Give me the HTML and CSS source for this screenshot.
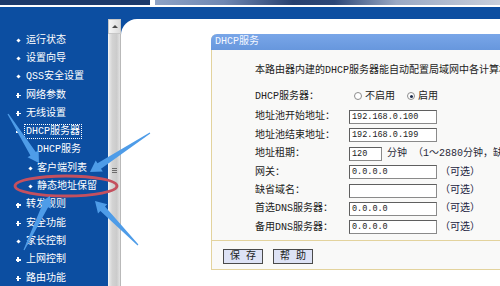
FILE: index.html
```html
<!DOCTYPE html>
<html lang="zh-CN">
<head>
<meta charset="utf-8">
<title>DHCP服务</title>
<link rel="stylesheet" href="styles.css">
</head>
<body>
<div class="page">
  <div class="topstrip"><div class="ts-left"></div><div class="ts-banner"></div></div>
  <div class="main">
    <nav class="sidebar">
      <ul class="menu">
        <li class="item"><span class="b b-dot"></span><span class="t">运行状态</span></li>
        <li class="item"><span class="b b-dot"></span><span class="t">设置向导</span></li>
        <li class="item"><span class="b b-dot"></span><span class="t">QSS安全设置</span></li>
        <li class="item"><span class="b b-plus"></span><span class="t">网络参数</span></li>
        <li class="item"><span class="b b-plus"></span><span class="t">无线设置</span></li>
        <li class="item"><span class="b b-minus"></span><span class="t focus">DHCP服务器</span></li>
        <li class="item sub"><span class="b b-dot"></span><span class="t">DHCP服务</span></li>
        <li class="item sub"><span class="b b-dot"></span><span class="t">客户端列表</span></li>
        <li class="item sub"><span class="b b-dot"></span><span class="t">静态地址保留</span></li>
        <li class="item"><span class="b b-plus"></span><span class="t">转发规则</span></li>
        <li class="item"><span class="b b-plus"></span><span class="t">安全功能</span></li>
        <li class="item"><span class="b b-dot"></span><span class="t">家长控制</span></li>
        <li class="item"><span class="b b-plus"></span><span class="t">上网控制</span></li>
        <li class="item"><span class="b b-plus"></span><span class="t">路由功能</span></li>
      </ul>
    </nav>
    <div class="scrollbar">
      <div class="sb-up"><span class="chev"></span></div>
      <div class="sb-thumb"><span class="grip"></span></div>
    </div>
    <div class="content">
      <div class="panel">
        <div class="panel-head">DHCP服务</div>
        <div class="panel-body">
          <p class="desc">本路由器内建的DHCP服务器能自动配置局域网中各计算机的TCP/IP协议。</p>
          <div class="radio-row">
            <span class="label">DHCP服务器：</span>
            <span class="radio"></span><span class="rtext">不启用</span>
            <span class="radio checked"></span><span class="rtext">启用</span>
          </div>
          <div class="row"><span class="label">地址池开始地址：</span><span class="input">192.168.0.100</span></div>
          <div class="row"><span class="label">地址池结束地址：</span><span class="input">192.168.0.199</span></div>
          <div class="row"><span class="label">地址租期：</span><span class="input short">120</span><span class="note">分钟 （1～2880分钟，缺省为120分钟）</span></div>
          <div class="row"><span class="label">网关：</span><span class="input">0.0.0.0</span><span class="opt">（可选）</span></div>
          <div class="row"><span class="label">缺省域名：</span><span class="input"></span><span class="opt">（可选）</span></div>
          <div class="row"><span class="label">首选DNS服务器：</span><span class="input">0.0.0.0</span><span class="opt">（可选）</span></div>
          <div class="row"><span class="label">备用DNS服务器：</span><span class="input">0.0.0.0</span><span class="opt">（可选）</span></div>
        </div>
        <div class="btnbar"><span class="btn">保 存</span><span class="btn">帮 助</span></div>
      </div>
    </div>
  </div>
  <svg class="annot" width="500" height="286" viewBox="0 0 500 286">
    <ellipse cx="66" cy="186" rx="51" ry="10" fill="none" stroke="#c4505f" stroke-width="2.8"/>
    <g fill="#4e9ce8">
      <polygon points="7.5,114.3 30.4,155.4 27.6,157.2 39,163 38.6,150.2 35.8,152 8.5,113.7"/>
      <polygon points="149.7,132.5 97.5,163.3 95.7,160.6 90,172 102.8,171.5 101,168.7 150.3,133.5"/>
      <polygon points="138.4,244.6 105,206.6 107.3,204.3 95,201 98,213.4 100.4,211.1 137.6,245.4"/>
      <polygon points="24.5,250.3 48.1,207.3 51.1,208.7 50,196 39.4,203.1 42.4,204.5 23.5,249.7"/>
    </g>
  </svg>
</div>
</body>
</html>
```

FILE: styles.css
```css
html, body {
  margin: 0;
  padding: 0;
  background: #ffffff;
}
.page {
  position: relative;
  width: 500px;
  height: 286px;
  overflow: hidden;
  font-family: "Liberation Mono", "Noto Sans CJK SC", sans-serif;
  font-size: 10px;
}
.topstrip {
  display: flex;
  height: 5px;
  margin-bottom: 2px;
}
.ts-left {
  width: 150px;
  background: #1d3a6b;
  margin-right: 5px;
}
.ts-banner {
  flex: 1;
  background: linear-gradient(to right, #8ea3c6 0%, #6f87b2 20%, #27406f 40%, #2b4677 52%, #9aa9c4 70%, #c9cfdb 100%);
}
.main {
  display: flex;
  height: 279px;
  padding-top: 12px;
  box-sizing: border-box;
  background: #0c4ea1;
}
.sidebar {
  width: 108px;
  flex: none;
}
.menu {
  list-style: none;
  margin: 0;
  padding: 12px 0 0 0;
}
.item {
  display: flex;
  align-items: center;
  height: 18.3px;
  padding-left: 14px;
  color: #ffffff;
  white-space: nowrap;
}
.item.sub {
  padding-left: 27px;
}
.b {
  width: 8px;
  height: 8px;
  margin-right: 4px;
  flex: none;
  position: relative;
}
.item.sub .b {
  width: 6px;
  margin-right: 4px;
}
.b-dot::before {
  content: "";
  position: absolute;
  left: 50%;
  top: 50%;
  width: 3px;
  height: 3px;
  margin: -1.5px 0 0 -1.5px;
  background: #ffffff;
  transform: rotate(45deg);
}
.b-plus::before, .b-plus::after, .b-minus::before {
  content: "";
  position: absolute;
  background: #ffffff;
}
.b-plus::before, .b-minus::before {
  left: 1.5px;
  top: 3.5px;
  width: 5px;
  height: 1.4px;
}
.b-plus::after {
  left: 3.3px;
  top: 1.7px;
  width: 1.4px;
  height: 5px;
}
.t {
  line-height: 13px;
}
.focus {
  outline: 1px dotted #ffffff;
  outline-offset: 0;
  padding: 0 1px;
  margin-left: -1px;
}
.scrollbar {
  width: 13px;
  flex: none;
  display: flex;
  flex-direction: column;
  overflow: hidden;
  background: #e4e4e4;
}
.sb-up {
  height: 15px;
  flex: none;
  box-sizing: border-box;
  border: 1px solid #c7c7c7;
  background: linear-gradient(to right, #f6f6f6, #dcdcdc);
  display: flex;
  align-items: center;
  justify-content: center;
}
.chev {
  width: 0;
  height: 0;
  border-left: 3px solid transparent;
  border-right: 3px solid transparent;
  border-bottom: 3px solid #4a4a4a;
}
.sb-thumb {
  height: 272px;
  flex: none;
  box-sizing: border-box;
  border-left: 1px solid #f2f2f2;
  border-right: 1px solid #b9b9b9;
  background: linear-gradient(to right, #e9e9e9 0%, #d3d3d3 30%, #cbcbcb 70%, #e2e2e2 100%);
  display: flex;
  align-items: center;
  justify-content: center;
}
.grip {
  width: 5px;
  height: 5px;
  background: repeating-linear-gradient(to bottom, #6c6c6c 0, #6c6c6c 1px, transparent 1px, transparent 2px);
}
.content {
  flex: 1;
  background: #ffffff;
  border-top-left-radius: 16px;
  overflow: hidden;
  min-width: 0;
}
.panel {
  margin: 15px 0 0 90px;
  width: 360px;
  border: 1px solid #e3d39d;
  border-top: none;
  border-top-left-radius: 6px;
  background: #f9f9f8;
}
.panel-head {
  height: 16px;
  line-height: 16px;
  padding-left: 4px;
  color: #f4f7ff;
  background: linear-gradient(to bottom, #79a6e8, #6797dd);
  border-top-left-radius: 6px;
  margin-left: -1px;
  margin-right: -1px;
}
.panel-body {
  padding: 14px 0 3px 43px;
  color: #222222;
  white-space: nowrap;
}
.desc {
  margin: 0;
  height: 14px;
  line-height: 14px;
}
.radio-row {
  display: flex;
  align-items: center;
  height: 14px;
  margin-top: 11px;
  margin-bottom: 4.8px;
}
.label {
  width: 94px;
  flex: none;
  line-height: 13px;
}
.radio {
  width: 8px;
  height: 8px;
  box-sizing: border-box;
  border: 1px solid #8d8d8d;
  border-radius: 50%;
  background: #ffffff;
  margin-left: 5px;
  margin-right: 3px;
  flex: none;
  position: relative;
}
.radio.checked {
  margin-left: 12px;
}
.radio.checked::after {
  content: "";
  position: absolute;
  left: 1.5px;
  top: 1.5px;
  width: 3px;
  height: 3px;
  border-radius: 50%;
  background: #1f2f4f;
}
.rtext {
  line-height: 13px;
}
.row {
  display: flex;
  align-items: center;
  height: 18.4px;
}
.input {
  width: 88px;
  height: 14px;
  box-sizing: border-box;
  border: 1px solid #5f5f5f;
  border-right-color: #8a8a8a;
  border-bottom-color: #8a8a8a;
  background: #ffffff;
  font-family: "Liberation Mono", monospace;
  font-size: 8.5px;
  line-height: 12px;
  padding-left: 2px;
  color: #222222;
  flex: none;
}
.input.short {
  width: 33px;
}
.note {
  margin-left: 5px;
  line-height: 13px;
  color: #2a2a3a;
}
.opt {
  margin-left: 3px;
  line-height: 13px;
  color: #1c2340;
}
.btnbar {
  display: flex;
  gap: 10px;
  height: 29px;
  box-sizing: border-box;
  padding: 8px 0 0 11px;
  border-top: 1px solid #e3d39d;
}
.btn {
  width: 40px;
  height: 15px;
  box-sizing: border-box;
  border: 1px solid #4a4a4a;
  background: #dde2f5;
  color: #222222;
  line-height: 13px;
  text-align: center;
}
.annot {
  position: absolute;
  left: 0;
  top: 0;
}
```
